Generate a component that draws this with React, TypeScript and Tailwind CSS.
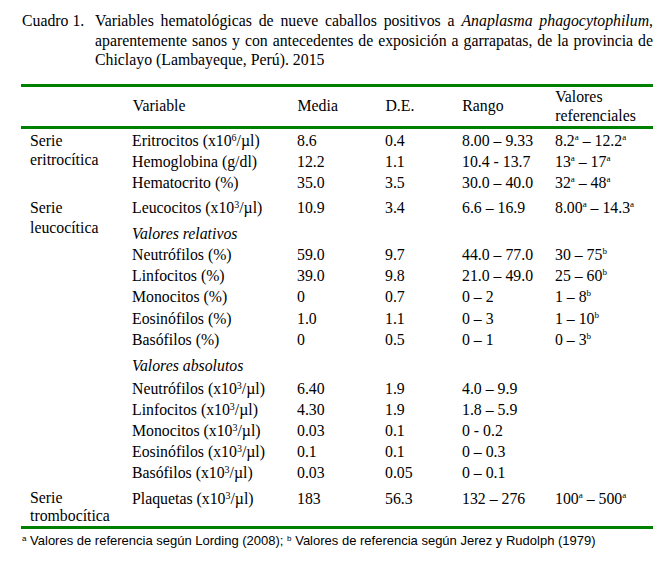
type Row = {
	v: React.ReactNode
	m?: string
	de?: string
	r?: string
	ref?: React.ReactNode
	italic?: boolean
	mt?: string
}

function Sup({ c }: { c: string }) {
	return <sup className="text-[9px] align-baseline relative -top-[6px]">{c}</sup>
}

function Pow({ n }: { n: string }) {
	return <sup className="text-[10px] align-baseline relative -top-[5px]">{n}</sup>
}

let unit = (name: string, n: string) => (
	<>
		{name} (x10<Pow n={n} />/µl)
	</>
)

let eritro: Row[] = [
	{ v: unit("Eritrocitos", "6"), m: "8.6", de: "0.4", r: "8.00 – 9.33", ref: <>8.2<Sup c="a" /> – 12.2<Sup c="a" /></> },
	{ v: "Hemoglobina (g/dl)", m: "12.2", de: "1.1", r: "10.4 - 13.7", ref: <>13<Sup c="a" /> – 17<Sup c="a" /></> },
	{ v: "Hematocrito (%)", m: "35.0", de: "3.5", r: "30.0 – 40.0", ref: <>32<Sup c="a" /> – 48<Sup c="a" /></> },
]

let leuco: Row[] = [
	{ v: unit("Leucocitos", "3"), m: "10.9", de: "3.4", r: "6.6 – 16.9", ref: <>8.00<Sup c="a" /> – 14.3<Sup c="a" /></> },
	{ v: "Valores relativos", italic: true, mt: "mt-[5px]" },
	{ v: "Neutrófilos (%)", m: "59.0", de: "9.7", r: "44.0 – 77.0", ref: <>30 – 75<Sup c="b" /></> },
	{ v: "Linfocitos (%)", m: "39.0", de: "9.8", r: "21.0 – 49.0", ref: <>25 – 60<Sup c="b" /></> },
	{ v: "Monocitos (%)", m: "0", de: "0.7", r: "0 – 2", ref: <>1 – 8<Sup c="b" /></> },
	{ v: "Eosinófilos (%)", m: "1.0", de: "1.1", r: "0 – 3", ref: <>1 – 10<Sup c="b" /></>, mt: "mt-[1px]" },
	{ v: "Basófilos (%)", m: "0", de: "0.5", r: "0 – 1", ref: <>0 – 3<Sup c="b" /></> },
	{ v: "Valores absolutos", italic: true, mt: "mt-[5px]" },
	{ v: unit("Neutrófilos", "3"), m: "6.40", de: "1.9", r: "4.0 – 9.9", mt: "mt-[2px]" },
	{ v: unit("Linfocitos", "3"), m: "4.30", de: "1.9", r: "1.8 – 5.9" },
	{ v: unit("Monocitos", "3"), m: "0.03", de: "0.1", r: "0 - 0.2" },
	{ v: unit("Eosinófilos", "3"), m: "0.1", de: "0.1", r: "0 – 0.3" },
	{ v: unit("Basófilos", "3"), m: "0.03", de: "0.05", r: "0 – 0.1" },
]

let trombo: Row[] = [
	{ v: unit("Plaquetas", "3"), m: "183", de: "56.3", r: "132 – 276", ref: <>100<Sup c="a" /> – 500<Sup c="a" /></> },
]

function DataRow({ row }: { row: Row }) {
	return (
		<div className={`flex h-[21px] leading-[21px] ${row.mt ?? ""}`}>
			<div className={`w-[165px] ${row.italic ? "italic" : ""}`}>{row.v}</div>
			<div className="w-[88px]">{row.m}</div>
			<div className="w-[77px]">{row.de}</div>
			<div className="w-[93px]">{row.r}</div>
			<div className="w-[98px] whitespace-nowrap">{row.ref}</div>
		</div>
	)
}

function Group({
	label,
	rows,
	className,
	labelLeading,
}: {
	label: [string, string]
	rows: Row[]
	className?: string
	labelLeading: string
}) {
	return (
		<div className={`flex ${className ?? ""}`}>
			<div className={`w-[112px] pl-[9px] pt-[1px] ${labelLeading}`}>
				<div>{label[0]}</div>
				<div>{label[1]}</div>
			</div>
			<div className="flex flex-col">
				{rows.map((row, i) => (
					<DataRow key={i} row={row} />
				))}
			</div>
		</div>
	)
}

export default function App() {
	return (
		<div className="w-[659px] h-[563px] bg-white text-black font-['Liberation_Serif',serif] text-[15.8px]">
			<div className="flex pt-[11px] pl-[22px] pr-[6px] leading-[19.5px]">
				<div className="w-[73px] shrink-0 whitespace-nowrap">Cuadro 1.</div>
				<div className="flex-1">
					<div className="text-justify [text-align-last:justify] whitespace-nowrap">
						Variables hematológicas de nueve caballos positivos a{" "}
						<i>Anaplasma phagocytophilum</i>,
					</div>
					<div className="text-justify [text-align-last:justify] whitespace-nowrap">
						aparentemente sanos y con antecedentes de exposición a garrapatas, de la
						provincia de
					</div>
					<div>Chiclayo (Lambayeque, Perú). 2015</div>
				</div>
			</div>

			<div className="ml-[21px] w-[632px] mt-[14px] font-['Liberation_Serif',serif]">
				<div className="h-[3px] bg-[#008000]" />
				<div className="flex h-[39px] items-center">
					<div className="w-[112px]" />
					<div className="w-[165px]">Variable</div>
					<div className="w-[88px]">Media</div>
					<div className="w-[77px]">D.E.</div>
					<div className="w-[93px]">Rango</div>
					<div className="w-[98px] leading-[19px]">
						<div>Valores</div>
						<div>referenciales</div>
					</div>
				</div>
				<div className="h-[3px] bg-[#008000]" />

				<Group
					label={["Serie", "eritrocítica"]}
					rows={eritro}
					className="mt-[1px]"
					labelLeading="leading-[19px]"
				/>
				<Group
					label={["Serie", "leucocítica"]}
					rows={leuco}
					className="mt-[4px]"
					labelLeading="leading-[20px]"
				/>
				<Group
					label={["Serie", "trombocítica"]}
					rows={trombo}
					className="mt-[5px]"
					labelLeading="leading-[18px]"
				/>
				<div className="h-[3px] bg-[#008000] mt-[1px]" />
			</div>

			<div className="pl-[22px] mt-[4px] font-['Liberation_Sans',sans-serif] text-[13px] leading-[16px]">
				<sup className="text-[8px] align-baseline relative -top-[4px]">a</sup> Valores de referencia
				según Lording (2008); <sup className="text-[8px] align-baseline relative -top-[4px]">b</sup>{" "}
				Valores de referencia según Jerez y Rudolph (1979)
			</div>
		</div>
	)
}
